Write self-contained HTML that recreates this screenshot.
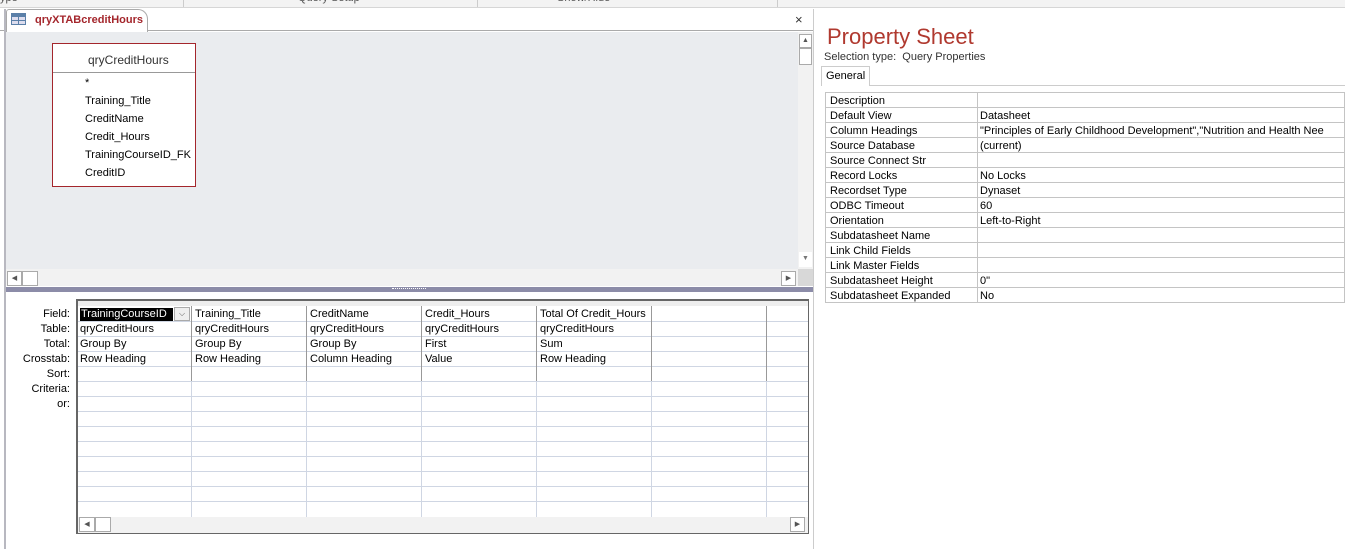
<!DOCTYPE html>
<html><head><meta charset="utf-8"><style>
*{margin:0;padding:0;box-sizing:border-box}
body{width:1345px;height:549px;overflow:hidden;background:#fff;font-family:"Liberation Sans",sans-serif;font-size:11px;color:#000;position:relative}
.a{position:absolute}
.t{position:absolute;white-space:nowrap;line-height:15px;padding-top:1px}
</style></head><body>
<div class="a" style="left:0;top:0;width:1345px;height:8px;background:#f3f3f3;border-bottom:1px solid #d6d6d6;overflow:hidden">
<div class="t" style="left:0;top:-10px;color:#555">ype</div>
<div class="t" style="left:298px;top:-10px;color:#555">Query Setup</div>
<div class="t" style="left:557px;top:-10px;color:#555">Show/Hide</div>
<div class="a" style="left:183px;top:0;width:1px;height:8px;background:#ccc"></div>
<div class="a" style="left:477px;top:0;width:1px;height:8px;background:#ccc"></div>
<div class="a" style="left:777px;top:0;width:1px;height:8px;background:#ccc"></div>
</div>
<div class="a" style="left:0;top:9px;width:813px;height:22px;background:#fff;border-bottom:1px solid #aaa"></div>
<div class="a" style="left:4px;top:9px;width:2px;height:540px;background:#b8b8c0"></div>
<div class="a" style="left:6px;top:9px;width:142px;height:23px;border:1px solid #aaa;border-bottom:none;border-radius:3px 10px 0 0;background:#fff"></div>
<svg class="a" style="left:11px;top:13px" width="16" height="13"><rect x="0" y="0" width="15" height="12" fill="#5a7fa8"/><rect x="1" y="4" width="6" height="3" fill="#dde"/><rect x="8" y="4" width="6" height="3" fill="#dde"/><rect x="1" y="8" width="6" height="3" fill="#dde"/><rect x="8" y="8" width="6" height="3" fill="#dde"/></svg>
<div class="t" style="left:35px;top:12px;color:#a4262c;font-weight:bold;font-size:11px">qryXTABcreditHours</div>
<div class="t" style="left:795px;top:11px;font-size:13px;color:#333">×</div>
<div class="a" style="left:6px;top:32px;width:792px;height:237px;background:#eaecef"></div>
<div class="a" style="left:798px;top:32px;width:15px;height:237px;background:#f2f2f2"></div>
<div class="a" style="left:799px;top:34px;width:13px;height:14px;background:#fff;border:1px solid #aaa;font-size:7px;text-align:center;line-height:12px;color:#555">▲</div>
<div class="a" style="left:799px;top:48px;width:13px;height:17px;background:#fff;border:1px solid #aaa"></div>
<div class="a" style="left:799px;top:252px;width:13px;height:15px;background:#fff;font-size:7px;text-align:center;line-height:14px;color:#777">▼</div>
<div class="a" style="left:6px;top:269px;width:792px;height:17px;background:#f2f2f2"></div>
<div class="a" style="left:7px;top:271px;width:15px;height:15px;background:#fff;border:1px solid #aaa;font-size:7px;line-height:13px;text-align:center;color:#555">◀</div>
<div class="a" style="left:22px;top:271px;width:16px;height:15px;background:#fff;border:1px solid #aaa"></div>
<div class="a" style="left:781px;top:271px;width:15px;height:15px;background:#fff;border:1px solid #aaa;font-size:7px;line-height:13px;text-align:center;color:#555">▶</div>
<div class="a" style="left:798px;top:269px;width:15px;height:17px;background:#d8d8d8"></div>
<div class="a" style="left:6px;top:287px;width:807px;height:5px;background:#8c8ca8"></div>
<div class="a" style="left:392px;top:288px;width:34px;height:2px;border-top:1px dotted #fff"></div>
<div class="a" style="left:52px;top:43px;width:144px;height:144px;border:1px solid #a4262c;background:#fff"></div>
<div class="a" style="left:53px;top:72px;width:142px;height:1px;background:#999"></div>
<div class="t" style="left:88px;top:52px;font-size:12px;color:#333">qryCreditHours</div>
<div class="t" style="left:85px;top:75px">*</div>
<div class="t" style="left:85px;top:93px">Training_Title</div>
<div class="t" style="left:85px;top:111px">CreditName</div>
<div class="t" style="left:85px;top:129px">Credit_Hours</div>
<div class="t" style="left:85px;top:147px">TrainingCourseID_FK</div>
<div class="t" style="left:85px;top:165px">CreditID</div>
<div class="a" style="left:76px;top:299px;width:733px;height:235px;border:2px solid #666;border-right-width:1px;border-bottom-width:2px;background:#fff"></div>
<div class="a" style="left:78px;top:301px;width:730px;height:5px;background:#eee"></div>
<svg class="a" style="left:78px;top:306px" width="730" height="211">
<g stroke="#cfd6e3" stroke-width="1">
<line x1="0" y1="15.5" x2="730" y2="15.5"/><line x1="0" y1="30.5" x2="730" y2="30.5"/><line x1="0" y1="45.5" x2="730" y2="45.5"/><line x1="0" y1="60.5" x2="730" y2="60.5"/><line x1="0" y1="75.5" x2="730" y2="75.5"/><line x1="0" y1="90.5" x2="730" y2="90.5"/><line x1="0" y1="105.5" x2="730" y2="105.5"/><line x1="0" y1="120.5" x2="730" y2="120.5"/><line x1="0" y1="135.5" x2="730" y2="135.5"/><line x1="0" y1="150.5" x2="730" y2="150.5"/><line x1="0" y1="165.5" x2="730" y2="165.5"/><line x1="0" y1="180.5" x2="730" y2="180.5"/><line x1="0" y1="195.5" x2="730" y2="195.5"/>
<line x1="113.5" y1="0" x2="113.5" y2="211"/><line x1="228.5" y1="0" x2="228.5" y2="211"/><line x1="343.5" y1="0" x2="343.5" y2="211"/><line x1="458.5" y1="0" x2="458.5" y2="211"/><line x1="573.5" y1="0" x2="573.5" y2="211"/><line x1="688.5" y1="0" x2="688.5" y2="211"/>
</g>
<g stroke="#999"><line x1="113.5" y1="-6" x2="113.5" y2="75"/><line x1="228.5" y1="-6" x2="228.5" y2="75"/><line x1="343.5" y1="-6" x2="343.5" y2="75"/><line x1="458.5" y1="-6" x2="458.5" y2="75"/><line x1="573.5" y1="-6" x2="573.5" y2="75"/><line x1="688.5" y1="-6" x2="688.5" y2="75"/></g>
</svg>
<div class="a" style="left:78px;top:517px;width:730px;height:16px;background:#f2f2f2"></div>
<div class="a" style="left:79px;top:517px;width:16px;height:15px;background:#fff;border:1px solid #aaa;font-size:7px;line-height:13px;text-align:center;color:#555">◀</div>
<div class="a" style="left:95px;top:517px;width:16px;height:15px;background:#fff;border:1px solid #aaa"></div>
<div class="a" style="left:790px;top:517px;width:15px;height:15px;background:#fff;border:1px solid #aaa;font-size:7px;line-height:13px;text-align:center;color:#555">▶</div>
<div class="t" style="right:1275px;top:306px">Field:</div>
<div class="t" style="right:1275px;top:321px">Table:</div>
<div class="t" style="right:1275px;top:336px">Total:</div>
<div class="t" style="right:1275px;top:351px">Crosstab:</div>
<div class="t" style="right:1275px;top:366px">Sort:</div>
<div class="t" style="right:1275px;top:381px">Criteria:</div>
<div class="t" style="right:1275px;top:396px">or:</div>
<div class="a" style="left:80px;top:308px;width:93px;height:13px;background:#000"></div>
<div class="t" style="left:81px;top:306px;color:#fff">TrainingCourseID</div>
<div class="a" style="left:174px;top:307px;width:16px;height:14px;background:#eee;border:1px solid #aaa;font-size:8px;text-align:center;line-height:12px;color:#555">⌵</div>
<div class="t" style="left:195px;top:306px">Training_Title</div>
<div class="t" style="left:310px;top:306px">CreditName</div>
<div class="t" style="left:425px;top:306px">Credit_Hours</div>
<div class="t" style="left:540px;top:306px">Total Of Credit_Hours</div>
<div class="t" style="left:80px;top:321px">qryCreditHours</div>
<div class="t" style="left:195px;top:321px">qryCreditHours</div>
<div class="t" style="left:310px;top:321px">qryCreditHours</div>
<div class="t" style="left:425px;top:321px">qryCreditHours</div>
<div class="t" style="left:540px;top:321px">qryCreditHours</div>
<div class="t" style="left:80px;top:336px">Group By</div>
<div class="t" style="left:195px;top:336px">Group By</div>
<div class="t" style="left:310px;top:336px">Group By</div>
<div class="t" style="left:425px;top:336px">First</div>
<div class="t" style="left:540px;top:336px">Sum</div>
<div class="t" style="left:80px;top:351px">Row Heading</div>
<div class="t" style="left:195px;top:351px">Row Heading</div>
<div class="t" style="left:310px;top:351px">Column Heading</div>
<div class="t" style="left:425px;top:351px">Value</div>
<div class="t" style="left:540px;top:351px">Row Heading</div>
<div class="a" style="left:813px;top:9px;width:1px;height:540px;background:#ccc"></div>
<div class="t" style="left:827px;top:24px;font-size:22px;line-height:24px;color:#b0392f">Property Sheet</div>
<div class="t" style="left:824px;top:49px;color:#333">Selection type:&nbsp;&nbsp;Query Properties</div>
<div class="a" style="left:821px;top:66px;width:49px;height:20px;border:1px solid #ccc;border-bottom:none;background:#fff"></div>
<div class="a" style="left:870px;top:85px;width:475px;height:1px;background:#ccc"></div>
<div class="t" style="left:826px;top:68px">General</div>
<div class="a" style="left:825px;top:92px;width:520px;height:211px;border:1px solid #c4c4c4"></div>
<div class="a" style="left:977px;top:92px;width:1px;height:211px;background:#c4c4c4"></div>
<svg class="a" style="left:826px;top:92px" width="519" height="210"><g stroke="#c4c4c4"><line x1="0" y1="15.5" x2="519" y2="15.5"/><line x1="0" y1="30.5" x2="519" y2="30.5"/><line x1="0" y1="45.5" x2="519" y2="45.5"/><line x1="0" y1="60.5" x2="519" y2="60.5"/><line x1="0" y1="75.5" x2="519" y2="75.5"/><line x1="0" y1="90.5" x2="519" y2="90.5"/><line x1="0" y1="105.5" x2="519" y2="105.5"/><line x1="0" y1="120.5" x2="519" y2="120.5"/><line x1="0" y1="135.5" x2="519" y2="135.5"/><line x1="0" y1="150.5" x2="519" y2="150.5"/><line x1="0" y1="165.5" x2="519" y2="165.5"/><line x1="0" y1="180.5" x2="519" y2="180.5"/><line x1="0" y1="195.5" x2="519" y2="195.5"/></g></svg>
<div class="t" style="left:830px;top:93px">Description</div>
<div class="t" style="left:830px;top:108px">Default View</div>
<div class="t" style="left:830px;top:123px">Column Headings</div>
<div class="t" style="left:830px;top:138px">Source Database</div>
<div class="t" style="left:830px;top:153px">Source Connect Str</div>
<div class="t" style="left:830px;top:168px">Record Locks</div>
<div class="t" style="left:830px;top:183px">Recordset Type</div>
<div class="t" style="left:830px;top:198px">ODBC Timeout</div>
<div class="t" style="left:830px;top:213px">Orientation</div>
<div class="t" style="left:830px;top:228px">Subdatasheet Name</div>
<div class="t" style="left:830px;top:243px">Link Child Fields</div>
<div class="t" style="left:830px;top:258px">Link Master Fields</div>
<div class="t" style="left:830px;top:273px">Subdatasheet Height</div>
<div class="t" style="left:830px;top:288px">Subdatasheet Expanded</div>
<div class="t" style="left:980px;top:108px">Datasheet</div>
<div class="t" style="left:980px;top:123px">"Principles of Early Childhood Development","Nutrition and Health Nee</div>
<div class="t" style="left:980px;top:138px">(current)</div>
<div class="t" style="left:980px;top:168px">No Locks</div>
<div class="t" style="left:980px;top:183px">Dynaset</div>
<div class="t" style="left:980px;top:198px">60</div>
<div class="t" style="left:980px;top:213px">Left-to-Right</div>
<div class="t" style="left:980px;top:273px">0"</div>
<div class="t" style="left:980px;top:288px">No</div>
</body></html>
